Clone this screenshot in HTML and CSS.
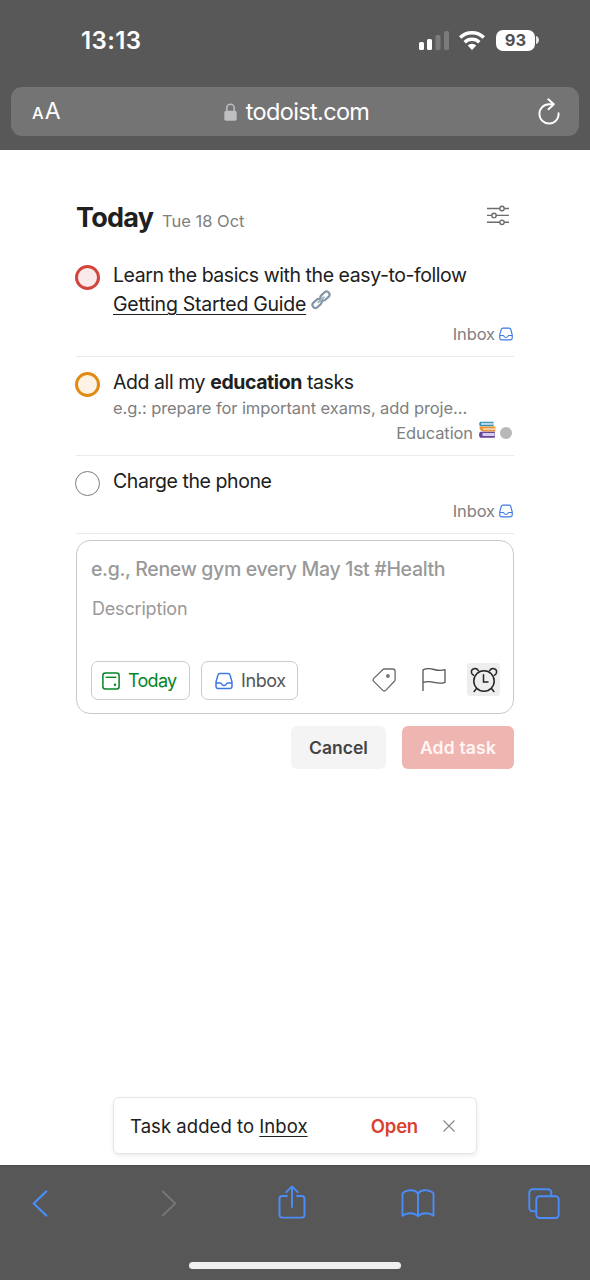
FILE: index.html
```html
<!DOCTYPE html>
<html lang="en">
<head>
<meta charset="utf-8">
<title>Today – Todoist</title>
<link rel="stylesheet" href="styles.css">
</head>
<body>
<svg class="defs" width="0" height="0">
  <symbol id="inbox" viewBox="0 0 18 18"><path d="M5 1.500h8a2.200 2.200 0 0 1 2.100 1.600l1.900 7V14.300a2.300 2.300 0 0 1-2.300 2.300H3.300A2.300 2.300 0 0 1 1 14.300V10.100l1.900-7A2.200 2.200 0 0 1 5 1.500zM1 10.900h4.300c.7 0 .9.500 1.200 1.100.5.900 1.300 1.500 2.500 1.500s2-.6 2.500-1.500c.3-.6.500-1.100 1.200-1.100H17" fill="none" stroke="#3c78e6" stroke-width="1.500"/></symbol>
</svg>
<div class="phone">
  <header class="browser-top">
    <div class="status">
      <span class="clock">13:13</span>
      <div class="status-icons">
        <svg class="signal" width="30" height="19" viewBox="0 0 30 19"><rect x="0" y="11" width="5" height="8" rx="1.500" fill="#fff"/><rect x="8" y="8" width="5" height="11" rx="1.500" fill="#fff"/><rect x="16.500" y="4" width="5" height="15" rx="1.500" fill="#7b7b7b"/><rect x="25" y="0" width="5" height="19" rx="1.500" fill="#7b7b7b"/></svg>
        <svg class="wifi" width="26" height="19" viewBox="0 0 26 19"><g fill="none" stroke="#fff" stroke-width="3.500"><path d="M1.200 6.600a17 17 0 0 1 23.600 0"/><path d="M5.700 11.300a10.500 10.500 0 0 1 14.600 0"/></g><path d="M8.700 14.600a6.200 6.200 0 0 1 8.600 0L13 19z" fill="#fff"/></svg>
        <div class="battery"><span class="battery-level">93</span></div>
        <svg width="3" height="8" viewBox="0 0 3 8"><path d="M0 0c4 1 4 7 0 8z" fill="#e4e4e4"/></svg>
      </div>
    </div>
    <div class="address">
      <span class="text-size"><small>A</small>A</span>
      <div class="site">
        <svg width="13" height="18" viewBox="0 0 13 18"><path d="M2.800 8.500V5a3.700 3.700 0 0 1 7.400 0v3.500" fill="none" stroke="#bebec3" stroke-width="1.500"/><rect x=".3" y="7.700" width="12.400" height="10" rx="1.800" fill="#bebec3"/></svg>
        <span class="domain">todoist.com</span>
      </div>
      <svg class="reload" width="22" height="27" viewBox="0 0 22 27"><g fill="none" stroke="#fff" stroke-width="1.900" stroke-linecap="round" stroke-linejoin="round"><path d="M15.200 6.300H11A9.600 9.600 0 1 0 20.600 15.200"/><path d="M10.300 1.200l5.500 5.100-5.300 5"/></g></svg>
    </div>
  </header>

  <main class="content">
    <div class="view-head">
      <h1 class="title">Today</h1>
      <span class="date">Tue 18 Oct</span>
      <svg class="filters" width="24" height="22" viewBox="0 0 24 22"><g fill="none" stroke="#6c6c6c" stroke-width="1.400"><path d="M1 4.500h12.800M18.200 4.500H23M1 11.400h4.800M10.200 11.400H23M1 18.300h12.800M18.200 18.300H23"/><circle cx="16" cy="4.500" r="2.200"/><circle cx="8" cy="11.400" r="2.200"/><circle cx="16" cy="18.300" r="2.200"/></g></svg>
    </div>

    <ul class="tasks">
      <li class="task task-first">
        <span class="check red"></span>
        <div class="task-body">
          <div class="name learn">Learn the basics with the easy-to-follow</div>
          <div class="name guide-line"><span class="link guide">Getting Started Guide</span>
            <svg width="20" height="20" viewBox="0 0 20 20"><g fill="none" stroke="#8296a6" stroke-width="2.200"><rect x="-5" y="-3" width="10" height="6" rx="3" transform="translate(6 13.500) rotate(-43)"/><rect x="-5" y="-3" width="10" height="6" rx="3" transform="translate(14 6) rotate(-43)"/></g><path d="M7.300 12.200l5.500-5" stroke="#a4b5c2" stroke-width="2" stroke-linecap="round"/></svg>
          </div>
          <div class="meta"><span class="inbox-label">Inbox</span><svg class="meta-inbox" width="14" height="14"><use href="#inbox"/></svg></div>
        </div>
      </li>
      <li class="task task-second">
        <span class="check orange"></span>
        <div class="task-body">
          <div class="name add">Add all my <b>education</b> tasks</div>
          <div class="desc">e.g.: prepare for important exams, add proje...</div>
          <div class="meta edu"><span class="edu-label">Education</span>
            <svg class="books" width="18" height="18" viewBox="0 0 18 18"><path d="M2 .8h13.500v4.400H2Q.2 3 2 .8z" fill="#3b8fb0"/><path d="M3 1.900h12.500v2H3z" fill="#bcd9ee"/><path d="M1.500 5.600h15.800v5H4.500Q1 9 1.500 5.600z" fill="#ed9132"/><path d="M5 7.100h12v2H5z" fill="#f5cf9f"/><path d="M2 10.800h14.800v6H2Q0 14 2 10.800z" fill="#67469c"/><path d="M4.500 12h12v3h-12z" fill="#d5cfe8"/></svg>
            <i class="dot"></i></div>
        </div>
      </li>
      <li class="task task-third">
        <span class="check"></span>
        <div class="task-body">
          <div class="name charge">Charge the phone</div>
          <div class="meta"><span class="inbox-label">Inbox</span><svg class="meta-inbox" width="14" height="14"><use href="#inbox"/></svg></div>
        </div>
      </li>
    </ul>

    <section class="editor">
      <div class="ph-name">e.g., Renew gym every May 1st #Health</div>
      <div class="ph-desc">Description</div>
      <div class="editor-bar">
        <div class="pill pill-today">
          <svg width="18" height="18" viewBox="0 0 18 18"><rect x=".9" y=".9" width="16.200" height="16.200" rx="2.500" fill="none" stroke="#058527" stroke-width="1.500"/><path d="M3.700 5.300h10.600" stroke="#058527" stroke-width="1.400"/><circle cx="13" cy="12.800" r="1.200" fill="#058527"/></svg>
          <span>Today</span>
        </div>
        <div class="pill pill-inbox">
          <svg width="18" height="18"><use href="#inbox"/></svg>
          <span>Inbox</span>
        </div>
        <div class="tools">
          <svg width="24" height="24" viewBox="0 0 24 24"><path d="M12.500 1h8.300a2.300 2.300 0 0 1 2.300 2.300v8.200a2.500 2.500 0 0 1-.7 1.700l-8.700 9.200a2 2 0 0 1-2.900 0l-9-9a2.200 2.200 0 0 1 0-3L10.700 1.700A2.500 2.500 0 0 1 12.500 1z" fill="none" stroke="#6c6c6c" stroke-width="1.300"/><circle cx="15.900" cy="8" r="1.900" fill="#777"/></svg>
          <svg width="24" height="24" viewBox="0 0 24 24"><path d="M1 23V1.900C4.500.2 8 .4 12 1.500s7.500 1.200 11 .2v12.600c-3.500 1.200-7 1.200-11 .1S4.500 13 1 14.700" fill="none" stroke="#555" stroke-width="1.300" stroke-linejoin="round"/></svg>
          <span class="alarm"><svg width="28" height="26" viewBox="0 0 28 26"><g fill="none" stroke="#242424" stroke-width="1.500" stroke-linecap="round"><circle cx="14" cy="14" r="10.200"/><path d="M13.500 7.700V15H18M6.500 21.500L4.100 24.400M21.500 21.500l2.400 2.900M3.500 8.300C.5 7 .8 2.400 3.800 1.700c2.100-.6 3.700.4 4.600 1.900M24.500 8.300c3-1.300 2.700-5.900-.3-6.600-2.100-.6-3.700.4-4.600 1.900"/></g></svg></span>
        </div>
      </div>
    </section>
    <div class="actions">
      <div class="btn cancel"><span>Cancel</span></div>
      <div class="btn submit"><span>Add task</span></div>
    </div>

    <div class="toast">
      <span class="toast-text">Task added to <span class="link">Inbox</span></span>
      <span class="open">Open</span>
      <svg width="14" height="14" viewBox="0 0 14 14"><path d="M1.500 1.500l11 11M12.500 1.500l-11 11" stroke="#858585" stroke-width="1.100"/></svg>
    </div>
  </main>

  <footer class="browser-bottom">
    <nav class="nav">
      <svg width="16" height="27" viewBox="0 0 16 27"><path d="M14.200 1.500L1.700 13.500l12.500 12" fill="none" stroke="#4b8df8" stroke-width="2.300" stroke-linecap="round" stroke-linejoin="round"/></svg>
      <svg class="forward" width="16" height="27" viewBox="0 0 16 27"><path d="M1.800 1.500l12.500 12-12.500 12" fill="none" stroke="#757575" stroke-width="2" stroke-linecap="round" stroke-linejoin="round"/></svg>
      <svg class="share" width="28" height="34" viewBox="0 0 28 34"><path d="M9 11H4.300A2.800 2.800 0 0 0 1.500 13.800v16A2.800 2.800 0 0 0 4.300 32.600h19.400a2.800 2.800 0 0 0 2.800-2.800v-16a2.800 2.800 0 0 0-2.800-2.800H19M14 22V1.500M8.200 7.200L14 1.400l5.800 5.800" fill="none" stroke="#4b8df8" stroke-width="1.900" stroke-linecap="round" stroke-linejoin="round"/></svg>
      <svg class="book" width="34" height="29" viewBox="0 0 34 29"><path d="M17 4.800C14.500.3 5.500.1 1.500 4.500v22.200c4.300-3.500 12-3.300 15.500.5 3.500-3.800 11.200-4 15.500-.5V4.500C28.500.1 19.500.3 17 4.800zV27" fill="none" stroke="#4b8df8" stroke-width="1.900" stroke-linejoin="round"/></svg>
      <svg class="tabs" width="32" height="31" viewBox="0 0 32 31"><g fill="none" stroke="#4b8df8" stroke-width="1.900"><path d="M8.200 23.300H4.500A3.200 3.200 0 0 1 1.300 20.100V4.500A3.200 3.200 0 0 1 4.500 1.300h15.600a3.200 3.200 0 0 1 3.200 3.200v3.700"/><rect x="8.300" y="8.300" width="22.400" height="21.700" rx="3.200"/></g></svg>
    </nav>
    <div class="home-bar"></div>
  </footer>
</div>
</body>
</html>
```
FILE: styles.css
```css
* { box-sizing: border-box; }
body { margin: 0; font-family: Inter, "Noto Sans", sans-serif; color: #202020; background: #fff; }
svg { display: block; flex: none; }
span { white-space: nowrap; }
.defs { position: absolute; }
.phone { width: 590px; height: 1280px; display: flex; flex-direction: column; overflow: hidden; }

.browser-top { height: 150px; background: #585858; color: #fff; padding: 0 11px; flex: none; }
.status { height: 87px; padding: 0 40px 7px 70px; display: flex; align-items: center; justify-content: space-between; }
.clock { font-size: 24px; font-weight: 600; letter-spacing: .4px; }
.status-icons { display: flex; align-items: center; }
.wifi { margin: 0 11px 0 10px; }
.battery { width: 39px; height: 21px; border-radius: 7px; background: #fff; color: #505050; display: flex; align-items: center; justify-content: center; margin-right: 1px; }
.battery-level { font-size: 16.500px; font-weight: 700; line-height: 21px; }
.address { height: 49px; border-radius: 11px; background: #747474; display: flex; align-items: center; justify-content: space-between; padding: 0 19px 0 21px; }
.text-size { font-size: 23px; line-height: 49px; width: 60px; padding-top: 1px; }
.text-size small { font-size: 16.500px; font-weight: 500; margin-right: 1px; }
.site { display: flex; align-items: center; gap: 9px; }
.domain { font-size: 23.500px; line-height: 49px; letter-spacing: -.64px; }
.reload { margin-left: 37px; }

.content { flex: 1; padding: 50px 76px 11px; display: flex; flex-direction: column; }
.view-head { height: 59px; display: flex; align-items: baseline; flex: none; }
.title { margin: 0; font-size: 27px; line-height: 35px; font-weight: 700; width: 86px; white-space: nowrap; letter-spacing: -.75px; }
.date { font-size: 16.500px; color: #808080; }
.filters { margin-left: auto; align-self: flex-start; margin-top: 4px; margin-right: 4px; }

.tasks { list-style: none; margin: 0; padding: 0; }
.task { display: flex; gap: 12px; border-bottom: 1px solid #eaeaea; }
.task-first { height: 98px; padding-top: 2px; }
.task-second { height: 99px; padding-top: 11px; }
.task-third { height: 78px; padding-top: 11px; }
.check { width: 25px; height: 25px; border-radius: 50%; border: 1.500px solid #7c7c7c; margin-top: 4px; flex: none; }
.red { border: 3px solid #d1453b; background: #faeae9; }
.orange { border: 3px solid #e08b13; background: #fdf2e3; }
.check { margin-left: -1px; margin-right: 1px; }
.task-body { flex: 1; min-width: 0; }
.name { font-size: 19.500px; line-height: 29px; white-space: nowrap; letter-spacing: -.43px; }
.guide { letter-spacing: -.26px; }
.guide-line { display: flex; gap: 5px; }
.link { text-decoration: underline; text-decoration-thickness: 1.300px; text-underline-offset: 3px; text-decoration-skip-ink: auto; }
.meta { height: 29px; display: flex; align-items: center; justify-content: flex-end; font-size: 16.500px; color: #808080; padding-top: 1px; letter-spacing: -.1px; }
.meta-inbox { margin-left: 4px; margin-right: 1px; }
.desc { font-size: 16.500px; line-height: 23px; color: #808080; white-space: nowrap; letter-spacing: -.08px; }
.edu { height: 25px; padding-top: 0; }
.books { margin: -5px 4px 0 5px; }
.dot { width: 12px; height: 12px; border-radius: 50%; background: #b8b8b8; margin-right: 2px; }

.editor { margin-top: 6px; height: 174px; border: 1.500px solid #c9c9c9; border-radius: 14px; padding: 14px 14px 0; flex: none; }
.ph-name { font-size: 19.500px; font-weight: 500; line-height: 29px; color: #999; letter-spacing: -.33px; white-space: nowrap; }
.ph-desc { font-size: 18px; line-height: 28px; color: #999; padding: 11px 0 0 1px; letter-spacing: -.18px; }
.editor-bar { display: flex; align-items: center; margin-top: 38px; }
.pill { height: 39px; border: 1.500px solid #ccc; border-radius: 7px; display: flex; align-items: center; gap: 8px; font-size: 18px; }
.pill-today { width: 99px; color: #058527; padding-left: 10px; margin-right: 11px; letter-spacing: -.7px; }
.pill-inbox { width: 97px; color: #555; padding-left: 13px; letter-spacing: -.4px; }
.tools { flex: 1; display: flex; align-items: center; justify-content: flex-end; gap: 26px; margin-top: -2px; margin-right: -1px; }
.alarm { width: 33px; height: 33px; border-radius: 3px; background: #eee; display: flex; align-items: center; justify-content: center; margin-left: -5px; }
.actions { margin-top: 12px; display: flex; justify-content: flex-end; gap: 16px; }
.btn { height: 43px; border-radius: 6px; font-size: 17.500px; font-weight: 600; display: flex; align-items: center; justify-content: center; padding-bottom: 1px; }
.cancel { width: 95px; background: #f4f4f4; color: #444; }
.submit { width: 112px; background: #efb5b1; color: #fff6f5; letter-spacing: .2px; }

.toast { margin: auto auto 0; width: 364px; height: 57px; border: 1.500px solid #e6e6e6; border-radius: 6px; box-shadow: 0 2px 4px rgba(0,0,0,.08); display: flex; align-items: center; padding: 0 20px 0 16px; font-size: 18.500px; }
.toast-text { letter-spacing: .05px; }
.open { margin-left: auto; margin-right: 24px; color: #d8432f; font-weight: 600; letter-spacing: -.2px; }

.browser-bottom { height: 115px; flex: none; background: #575757; border-top: 1px solid #4a4a4a; }
.nav { height: 74px; padding-left: 32px; display: flex; align-items: center; }
.forward { margin-left: 113px; }
.share { margin-left: 101px; margin-top: -2px; }
.book { margin-left: 95px; }
.tabs { margin-left: 93px; }
.home-bar { width: 212px; height: 7px; border-radius: 4px; background: #f0f0f0; margin: 22px auto 0; }
```
